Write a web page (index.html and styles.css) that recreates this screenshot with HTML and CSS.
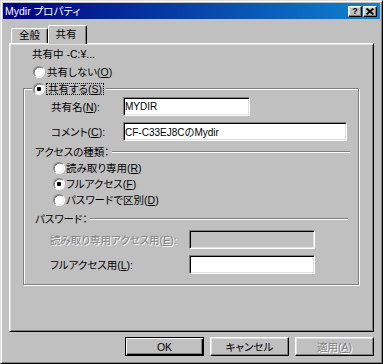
FILE: index.html
```html
<!DOCTYPE html>
<html lang="ja">
<head>
<meta charset="utf-8">
<title>Mydir プロパティ</title>
<link rel="stylesheet" href="styles.css">
</head>
<body>
<div class="window">
  <div class="titlebar">
    <span class="title">Mydir プロパティ</span>
    <div class="caption-buttons">
      <span class="cap-btn help">?</span>
      <span class="cap-btn close"><svg width="8" height="7" viewBox="0 0 8 7"><path d="M0.6 0.5L7.4 6.5M7.4 0.5L0.6 6.5" stroke="#000" stroke-width="1.7" fill="none"/></svg></span>
    </div>
  </div>
  <div class="client">
    <div class="tabs">
      <div class="tab">全般</div>
      <div class="tab active">共有</div>
    </div>
    <div class="panel">
      <div class="status">共有中 -C:¥...</div>
      <div class="radio-row top"><span class="radio"></span><span>共有しない(<u>O</u>)</span></div>
      <fieldset class="group">
        <legend><span class="radio checked"></span><span class="focus">共有する(<u>S</u>)</span></legend>
        <div class="field-row"><span class="lbl">共有名(<u>N</u>):</span><input class="edit w-name" value="MYDIR"></div>
        <div class="field-row second"><span class="lbl">コメント(<u>C</u>):</span><input class="edit w-comment" value="CF-C33EJ8CのMydir"></div>
        <div class="section"><span>アクセスの種類：</span><span class="rule"></span></div>
        <div class="options">
          <div class="radio-row"><span class="radio"></span><span>読み取り専用(<u>R</u>)</span></div>
          <div class="radio-row"><span class="radio checked"></span><span>フルアクセス(<u>F</u>)</span></div>
          <div class="radio-row"><span class="radio"></span><span>パスワードで区別(<u>D</u>)</span></div>
        </div>
        <div class="section pw"><span>パスワード：</span><span class="rule"></span></div>
        <div class="pw-row first"><span class="lbl2 disabled-text">読み取り専用アクセス用(<u>E</u>):</span><input class="edit w-pw" disabled></div>
        <div class="pw-row"><span class="lbl2">フルアクセス用(<u>L</u>):</span><input class="edit w-pw"></div>
      </fieldset>
    </div>
    <div class="buttons">
      <button class="btn default">OK</button>
      <button class="btn">キャンセル</button>
      <button class="btn disabled-text">適用(<u>A</u>)</button>
    </div>
  </div>
</div>
</body>
</html>
```

FILE: styles.css
```css
* { box-sizing: border-box; }
html, body { margin: 0; padding: 0; }
body {
  width: 383px;
  height: 364px;
  overflow: hidden;
  background: #c0c0c0;
  color: #000;
  font: 10.5px/12px "Liberation Sans", "Noto Sans CJK JP", sans-serif;
  font-feature-settings: "palt";
}
u { text-decoration: underline; text-underline-offset: 1px; }

.window {
  width: 383px;
  height: 364px;
  background: #c0c0c0;
  border: 1px solid;
  border-color: #dfdfdf #000 #000 #dfdfdf;
  box-shadow: inset 1px 1px 0 #fff, inset -1px -1px 0 #808080;
  padding: 2px;
  display: flex;
  flex-direction: column;
}

.titlebar {
  height: 16px;
  flex: none;
  background: linear-gradient(to right, #000080, #1084d0);
  color: #fff;
  display: flex;
  align-items: center;
  padding-left: 2px;
}
.title { flex: 1; line-height: 12px; }
.caption-buttons { display: flex; gap: 1px; margin-right: 3px; }
.cap-btn {
  width: 14px;
  height: 11px;
  background: #c0c0c0;
  border: 1px solid;
  border-color: #fff #000 #000 #fff;
  box-shadow: inset -1px -1px 0 #808080, inset 1px 1px 0 #dfdfdf;
  display: flex;
  align-items: center;
  justify-content: center;
  color: #000;
}
.cap-btn.help { font: bold 9px/9px "Liberation Sans", sans-serif; }
.cap-btn svg { display: block; }

.client {
  flex: 1;
  display: flex;
  flex-direction: column;
  padding: 6px 6px 5px 6px;
}

.tabs {
  height: 18px;
  flex: none;
  display: flex;
  align-items: flex-end;
  padding-left: 2px;
}
.tab {
  height: 15px;
  width: 37px;
  text-align: center;
  line-height: 12px;
  border-top: 1px solid #fff;
  border-left: 1px solid #fff;
  border-right: 1px solid #000;
  border-radius: 2px 2px 0 0;
  box-shadow: inset -1px 0 0 #808080;
  background: #c0c0c0;
}
.tab.active {
  width: 39px;
  height: 19px;
  margin-bottom: -1px;
  padding-top: 2px;
  padding-right: 3px;
  position: relative;
  z-index: 1;
}

.panel {
  height: 289px;
  flex: none;
  border: 1px solid;
  border-color: #fff #000 #000 #fff;
  box-shadow: inset 1px 1px 0 #dfdfdf, inset -1px -1px 0 #808080;
  padding: 2px 14px 0 13px;
}

.status { height: 16px; line-height: 16px; margin-left: 9px; }

.radio-row {
  height: 16px;
  display: flex;
  align-items: center;
  gap: 1px;
}
.radio-row.top { margin-top: 2px; margin-left: 10px; gap: 2px; }

.radio {
  width: 12px;
  height: 12px;
  flex: none;
  border-radius: 50%;
  background: #fff;
  border: 1px solid;
  border-color: #808080 #fff #fff #808080;
  box-shadow: inset 0.6px 0.6px 0 #404040, inset -0.6px -0.6px 0 #dfdfdf;
  display: inline-grid;
  place-items: center;
  vertical-align: middle;
}
.radio.checked::after {
  content: "";
  width: 4px;
  height: 4px;
  border-radius: 1px;
  background: #000;
}

.group {
  margin: 0;
  min-width: 0;
  border: 1px solid #808080;
  box-shadow: inset 1px 1px 0 #fff, 1px 1px 0 #fff;
  padding: 1px 8px 10px 8px;
}
.group legend {
  height: 16px;
  line-height: 16px;
  padding: 0 2px 0 1px;
  background: #c0c0c0;
  white-space: nowrap;
}
.focus {
  display: inline-block;
  vertical-align: middle;
  height: 12px;
  line-height: 10px;
  margin-left: 1px;
  padding: 0 1px;
  border: 1px dotted #000;
}

.field-row { display: flex; align-items: center; }
.field-row.second { margin-top: 6px; }
.lbl { width: 91px; padding-left: 19px; flex: none; }

.edit {
  height: 19px;
  margin: 0;
  padding: 0 1px;
  font: 10px "Liberation Sans", "Noto Sans CJK JP", sans-serif;
  color: #000;
  background: #fff;
  border: 1px solid;
  border-color: #808080 #fff #fff #808080;
  box-shadow: inset 1px 1px 0 #000, inset -1px -1px 0 #dfdfdf;
  border-radius: 0;
  outline: none;
}
.edit:disabled { background: #c0c0c0; }
.w-name { width: 127px; }
.w-comment { width: 224px; }
.w-pw { width: 126px; }

.section {
  display: flex;
  align-items: center;
  margin-top: 5px;
  margin-left: 3px;
  height: 12px;
}
.section.pw { margin-right: 2px; }
.rule {
  flex: 1;
  height: 2px;
  margin-left: 2px;
  border-top: 1px solid #808080;
  border-bottom: 1px solid #fff;
}

.options { margin-top: 2px; }
.options .radio-row { padding-left: 21px; }

.pw-row { display: flex; align-items: center; margin-top: 6px; }
.pw-row.first { margin-top: 5px; }
.lbl2 { width: 157px; padding-left: 18px; flex: none; }

.disabled-text { color: #808080; text-shadow: 1px 1px 0 #fff; }

.buttons {
  display: flex;
  justify-content: flex-end;
  gap: 6px;
  margin-top: 5px;
}
.btn {
  width: 79px;
  height: 19px;
  margin: 0;
  padding: 0;
  font: inherit;
  line-height: 12px;
  color: #000;
  background: #c0c0c0;
  border: 1px solid;
  border-color: #fff #000 #000 #fff;
  box-shadow: inset -1px -1px 0 #808080, inset 1px 1px 0 #dfdfdf;
  border-radius: 0;
}
.btn.default {
  border-color: #000;
  box-shadow: inset 1px 1px 0 #fff, inset -1px -1px 0 #000, inset -2px -2px 0 #808080;
}
.btn.disabled-text { color: #808080; }
```
